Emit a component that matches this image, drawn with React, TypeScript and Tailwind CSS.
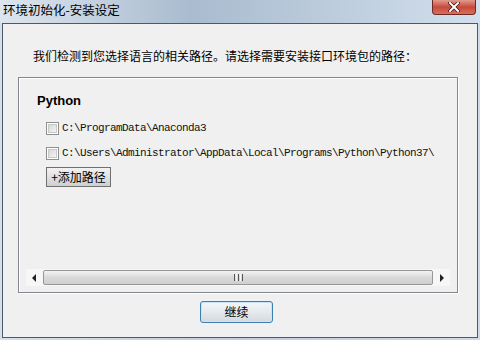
const cjk = "font-['Noto_Sans_CJK_SC',sans-serif]";

function CheckRow({ path }: { path: string }) {
  return (
    <div className="flex items-center h-[13px] gap-[3px]">
      <div className="w-[13px] h-[13px] border border-[#8e8f8f] bg-white p-[1px] shrink-0">
        <div className="w-full h-full bg-gradient-to-br from-[#d8d8d8] to-[#f4f4f4] border border-[#c9c9c9]" />
      </div>
      <span className="font-['Liberation_Mono',monospace] text-[11px] tracking-[-0.6px] text-[#111] whitespace-nowrap leading-none">
        {path}
      </span>
    </div>
  );
}

function ScrollBar() {
  return (
    <div className="flex items-center h-[17px] bg-[#f7f7f7]">
      <div className="w-[17px] h-full flex items-center justify-center">
        <svg width="5" height="8" viewBox="0 0 5 8">
          <path d="M4 0 L0 4 L4 8 Z" fill="#222" />
        </svg>
      </div>
      <div className="flex-1 h-[15px] rounded-[2px] border border-[#979797] bg-gradient-to-b from-[#f3f3f3] via-[#d9d9d9] to-[#cfcfcf] flex items-center justify-center">
        <div className="flex gap-[1px]">
          <div className="w-[1px] h-[7px] bg-[#555]" />
          <div className="w-[1px] h-[7px] bg-[#f8f8f8]" />
          <div className="w-[1px] h-[7px] bg-[#555]" />
          <div className="w-[1px] h-[7px] bg-[#f8f8f8]" />
          <div className="w-[1px] h-[7px] bg-[#555]" />
        </div>
      </div>
      <div className="w-[17px] h-full flex items-center justify-center">
        <svg width="5" height="8" viewBox="0 0 5 8">
          <path d="M1 0 L5 4 L1 8 Z" fill="#222" />
        </svg>
      </div>
    </div>
  );
}

export default function App() {
  return (
    <div className="w-[480px] h-[340px] flex flex-col bg-gradient-to-r from-[#d3dfeb] via-[#bfcfdf] to-[#cddbe9] overflow-hidden">
      {/* title bar */}
      <div className="h-[23px] flex items-start justify-between shrink-0 bg-gradient-to-r from-[#dde6ef] via-[#a9bbcf] via-40% to-[#d2dfec]">
        <span className={`${cjk} text-[12.5px] text-black pl-[3px] pt-[1px] leading-[18px]`}>
          环境初始化-安装设定
        </span>
        <div className="mr-[4px] w-[44px] h-[15px] rounded-b-[4px] border border-t-0 border-[#6b2a24] bg-gradient-to-b from-[#e19a8e] via-[#c7493a] to-[#d5705c] flex items-center justify-center">
          <svg width="12" height="10" viewBox="0 0 12 10">
            <path d="M2 1 L10 9 M10 1 L2 9" stroke="#3a1410" strokeWidth="3.4" strokeLinecap="square" />
            <path d="M2 1 L10 9 M10 1 L2 9" stroke="#fff" strokeWidth="2" strokeLinecap="square" />
          </svg>
        </div>
      </div>

      {/* client */}
      <div className="flex-1 mx-[2px] mb-[2px] border border-[#4f5864] bg-[#f0f0f0] flex flex-col">
        <div className={`${cjk} text-[12px] leading-[16px] text-black pl-[30px] mt-[24px]`}>
          我们检测到您选择语言的相关路径。请选择需要安装接口环境包的路径：
        </div>

        <div className="ml-[15px] mt-[13px] w-[440px] h-[216px] border border-[#828790] shadow-[1px_1px_0_#ffffff,inset_1px_1px_0_#ffffff] flex flex-col">
          <div className="font-['Liberation_Sans',sans-serif] font-bold text-[13px] leading-[16px] text-black pl-[18px] mt-[15px]">
            Python
          </div>
          <div className="pl-[27px] mt-[13px] flex flex-col gap-[12px]">
            <CheckRow path={"C:\\ProgramData\\Anaconda3"} />
            <CheckRow path={"C:\\Users\\Administrator\\AppData\\Local\\Programs\\Python\\Python37\\"} />
          </div>
          <div className="pl-[27px] mt-[7px]">
            <div
              className={`${cjk} w-[65px] h-[20px] border border-[#707070] bg-gradient-to-b from-[#f2f2f2] via-[#e0e0e0] to-[#cfcfcf] text-[12px] leading-[18px] text-black flex items-center justify-center`}
            >
              +添加路径
            </div>
          </div>
          <div className="mt-auto mb-[6px] mx-[7px]">
            <ScrollBar />
          </div>
        </div>

        <div className="flex pl-[197px] mt-[8px]">
          <div
            className={`${cjk} w-[73px] h-[22px] rounded-[3px] border border-[#3c7fb1] bg-gradient-to-b from-[#f3f6f9] via-[#e6eaee] to-[#d3d9df] shadow-[inset_0_0_0_1px_#c9e4f6] text-[12px] text-black flex items-center justify-center`}
          >
            继续
          </div>
        </div>
      </div>
    </div>
  );
}
